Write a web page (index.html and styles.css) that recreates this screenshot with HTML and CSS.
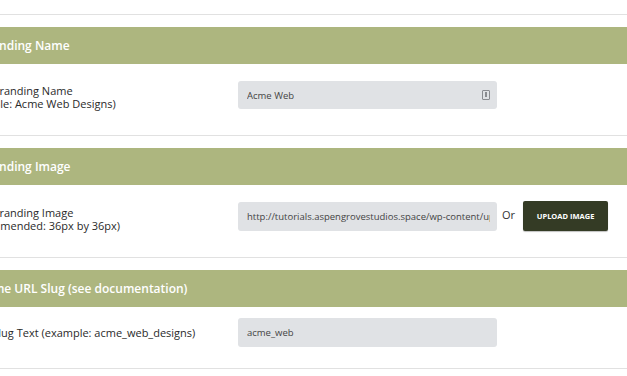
FILE: index.html
```html
<!DOCTYPE html>
<html lang="en">
<head>
    <meta charset="UTF-8">
    <meta name="viewport" content="width=device-width, initial-scale=1.0">
    <title>Branding Settings</title>
    <link rel="stylesheet" href="styles.css">
</head>
<body>
    <div class="settings">
        <div class="prev-row"></div>

        <section class="group">
            <h3 class="group-title">Branding Name</h3>
            <div class="field-row">
                <label class="field-label" for="brand-name">Enter Branding Name<br>(example: Acme Web Designs)</label>
                <div class="field-control">
                    <div class="text-box">
                        <input type="text" id="brand-name" value="Acme Web" readonly>
                        <svg class="autofill" width="8" height="10" viewBox="0 0 8 10">
                            <rect x="0.5" y="0.5" width="7" height="9" rx="0.5" fill="none" stroke="#8a8c90"/>
                            <rect x="3" y="2" width="2" height="5" fill="#8a8c90"/>
                        </svg>
                    </div>
                </div>
            </div>
        </section>

        <section class="group">
            <h3 class="group-title">Branding Image</h3>
            <div class="field-row with-button">
                <label class="field-label" for="brand-image">Enter Branding Image<br>(Recommended: 36px by 36px)</label>
                <div class="field-control">
                    <div class="text-box tall">
                        <input type="text" id="brand-image" value="http://tutorials.aspengrovestudios.space/wp-content/uploads/acme-icon.png" readonly>
                    </div>
                    <span class="or">Or</span>
                    <button class="upload-btn">Upload Image</button>
                </div>
            </div>
        </section>

        <section class="group">
            <h3 class="group-title">Acme URL Slug (see documentation)</h3>
            <div class="field-row compact">
                <label class="field-label" for="slug">Enter Slug Text (example: acme_web_designs)</label>
                <div class="field-control">
                    <div class="text-box tall">
                        <input type="text" id="slug" value="acme_web" readonly>
                    </div>
                </div>
            </div>
        </section>
    </div>
</body>
</html>
```

FILE: styles.css
```css
body {
    margin: 0;
    overflow: hidden;
    background-color: #ffffff;
    font-family: "Open Sans", "Liberation Sans", sans-serif;
    color: #333333;
}
.settings {
    width: 720px;
    margin-left: -38px; /* page is scrolled sideways */
}
.prev-row {
    height: 14px;
    border-bottom: 1px solid #e1e1e1;
}
.group {
    margin-top: 12px;
    border-bottom: 1px solid #e1e1e1;
}
.group-title {
    margin: 0;
    height: 37px;
    line-height: 37px;
    padding-left: 17px;
    background-color: #adb67f; /* olive header */
    color: #ffffff;
    font-size: 12px;
    font-weight: 600;
}
.field-row {
    display: grid;
    grid-template-columns: 276px auto;
    align-items: start;
    height: 71px;
}
.field-row.with-button {
    height: 72px;
}
.field-row.compact {
    height: 61px;
}
.field-label {
    padding-top: 20px;
    font-size: 11px;
    line-height: 13px;
    color: #2a2a2a;
}
.with-button .field-label {
    padding-top: 21px;
}
.compact .field-label {
    padding-top: 19px;
}
.field-control {
    display: flex;
    align-items: center;
    padding-top: 17px;
}
.with-button .field-control {
    padding-top: 16px;
}
.compact .field-control {
    padding-top: 11px;
}
.text-box {
    display: flex;
    align-items: center;
    width: 259px;
    height: 28px;
    padding: 0 7px 0 9px;
    box-sizing: border-box;
    background-color: #e0e2e5;
    border-radius: 3px;
}
.text-box.tall {
    height: 29px;
}
.text-box input {
    flex: 1;
    min-width: 0;
    border: none;
    padding: 0;
    background: transparent;
    font-family: inherit;
    font-size: 9.5px;
    color: #444444;
    outline: none;
}
.autofill {
    flex: none;
    margin-left: 6px;
}
.or {
    margin: 0 8px 0 5px;
    font-size: 11px;
    position: relative;
    top: -2px;
}
.upload-btn {
    width: 85px;
    height: 30px;
    border: none;
    border-radius: 2px;
    background-color: #343b25;
    color: #ffffff;
    font-family: inherit;
    font-size: 7.5px;
    font-weight: 700;
    text-transform: uppercase;
    box-shadow: 0 1px 1px rgba(0, 0, 0, 0.25);
}
```
